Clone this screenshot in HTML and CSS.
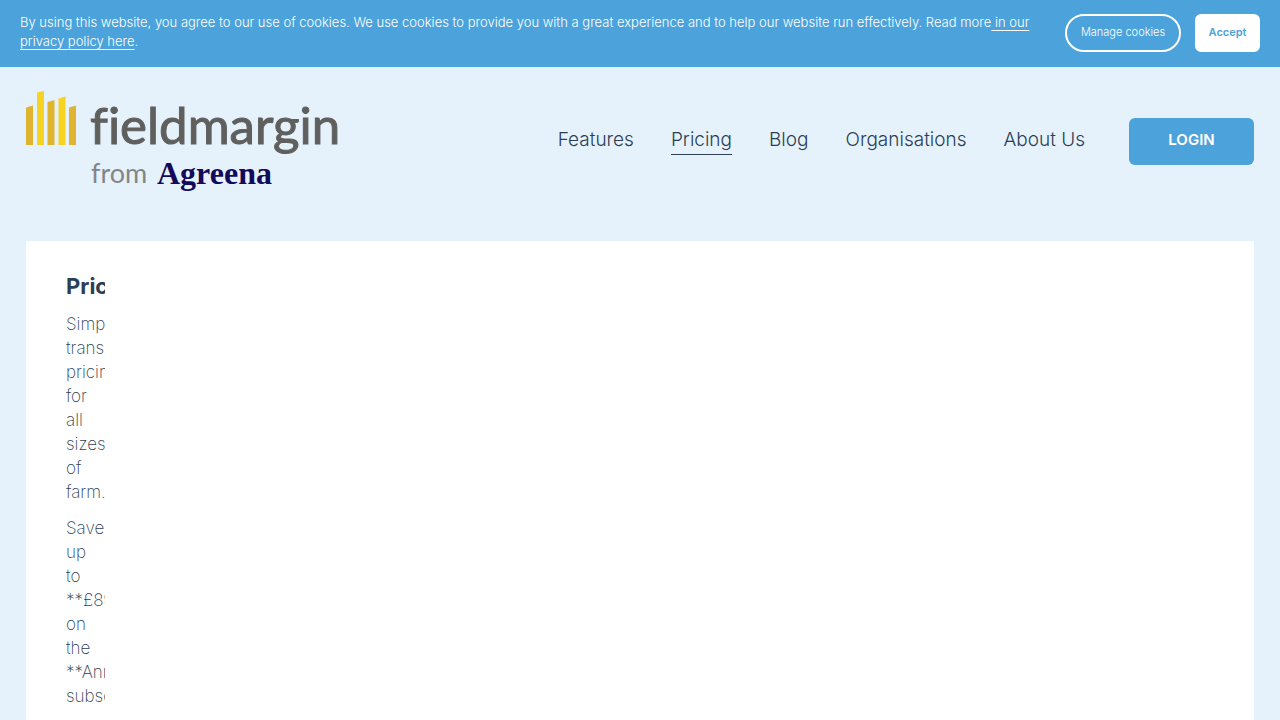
FILE: index.html
```html
<!DOCTYPE html>
<html lang="en">
<head>
<meta charset="utf-8">
<meta name="viewport" content="width=device-width, initial-scale=1">
<title>Pricing — fieldmargin</title>
<link rel="stylesheet" href="styles.css">
</head>
<body>
<section class="cookie-banner" aria-label="Cookies">
  <p class="cookie-text">By using this website, you agree to our use of cookies. We use cookies to provide you with a great experience and to help our website run effectively. Read more<a class="cookie-link" href="#privacy"> in our privacy policy here</a>.</p>
  <div class="cookie-actions">
    <button class="cookie-button manage" type="button">Manage cookies</button>
    <button class="cookie-button accept" type="button">Accept</button>
  </div>
</section>
<header class="site-header">
  <a class="logo" href="#home" aria-label="fieldmargin from Agreena">
    <svg class="logo-art" viewBox="0 0 316 104" width="316" height="104">
      <path fill="#e0b42e" d="M0 17.500 7 15.500V55H0zM21.500 12 28.500 10V55H21.500zM43 17.500 50 15.500V55H43z"/>
      <path fill="#f6d321" d="M11 2.500 18 1V55H11zM32.500 8.500 39.500 6.500V55H32.500z"/>
      <text class="logo-name" x="64" y="54">fieldmargin</text>
      <text class="logo-from" x="65" y="93">from</text>
      <text class="logo-agreena" x="131" y="94">Agreena</text>
    </svg>
  </a>
  <nav class="site-nav">
    <a class="nav-link" href="#features">Features</a>
    <a class="nav-link current" href="#pricing" aria-current="page">Pricing</a>
    <a class="nav-link" href="#blog">Blog</a>
    <a class="nav-link" href="#organisations">Organisations</a>
    <a class="nav-link" href="#about">About Us</a>
    <a class="login" href="#login">LOGIN</a>
  </nav>
</header>
<main class="pricing">
  <div class="pricing-column">
    <h1 class="pricing-title">Pricing</h1>
    <p class="pricing-text">Simple, transparent pricing for all sizes of farm.</p>
    <p class="pricing-text">Save up to **£89** on the **Annual** subscription</p>
  </div>
</main>
</body>
</html>
```

FILE: styles.css
```css
* { box-sizing: border-box; }
html, body { height: 100%; }
body {
  margin: 0;
  display: flex;
  flex-direction: column;
  overflow: hidden;
  background: #e5f2fc;
  color: #2c3e54;
  font-family: Inter, "Liberation Sans", sans-serif;
  font-weight: 300;
}
.cookie-banner {
  display: flex;
  justify-content: space-between;
  gap: 24px;
  padding: 14px 20px 15px;
  background: #4ca3db;
  color: #fff;
}
.cookie-text { margin: -1px 0 0; font-size: 13px; line-height: 19px; }
.cookie-link { color: inherit; text-decoration: underline; text-underline-offset: 3px; text-decoration-skip-ink: none; }
.cookie-actions { display: flex; flex: none; gap: 14px; }
.cookie-button {
  height: 38px;
  padding: 0 0 2px;
  border: 2px solid #fff;
  font: 300 11px Inter, sans-serif;
  white-space: nowrap;
}
.manage { border-radius: 19px; background: transparent; color: #fff; width: 116px; }
.accept { border-radius: 6px; background: #fff; color: #4ca3db; font-weight: 600; width: 65px; }
.site-header {
  display: flex;
  align-items: center;
  justify-content: space-between;
  padding: 23px 26px 47px;
}
.logo { display: block; }
.logo-art { display: block; overflow: visible; }
.logo-name {
  font: 400 51px Lato, sans-serif;
  font-variant-ligatures: none;
  fill: #5f5f5e;
  stroke: #5f5f5e;
  stroke-width: 1px;
}
.logo-from { font: 400 27px Lato, sans-serif; fill: #858585; }
.logo-agreena { font: 700 32px "Liberation Serif", serif; fill: #14095a; }
.site-nav { display: flex; align-items: center; gap: 37px; padding-bottom: 2px; }
.nav-link {
  border-bottom: 1px solid transparent;
  padding-bottom: 1px;
  color: inherit;
  font-size: 19px;
  line-height: 26px;
  text-decoration: none;
  white-space: nowrap;
}
.current { border-color: #2c3e54; }
.login {
  margin-left: 7px;
  width: 125px;
  height: 47px;
  border-radius: 6px;
  background: #4ca3db;
  color: #fff;
  font-size: 15px;
  font-weight: 600;
  line-height: 43px;
  text-align: center;
  text-decoration: none;
}
.pricing { flex: 1; margin: 0 26px; padding: 31px 40px 0; background: #fff; }
.pricing-column { width: 39px; overflow: hidden; }
.pricing-title { margin: 0 0 12px; font-size: 22px; font-weight: 700; line-height: 28px; }
.pricing-text { width: 37px; margin: 0 0 12px; font-size: 17px; font-weight: 200; line-height: 24px; }
```
